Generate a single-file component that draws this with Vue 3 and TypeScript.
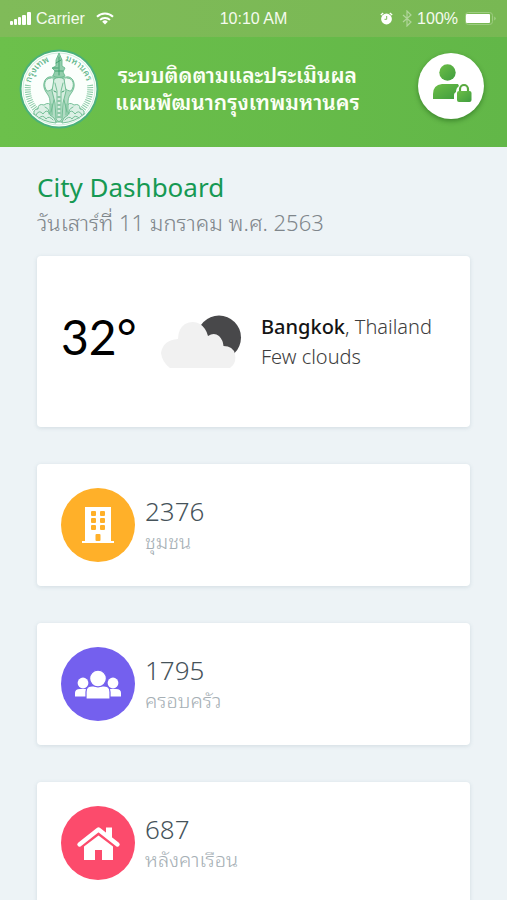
<script setup lang="ts">
interface Stat {
  id: string
  value: number
  label: string
  tone: 'amber' | 'violet' | 'rose'
}

const stats: Stat[] = [
  { id: 'building', value: 2376, label: 'ชุมชน', tone: 'amber' },
  { id: 'family', value: 1795, label: 'ครอบครัว', tone: 'violet' },
  { id: 'house', value: 687, label: 'หลังคาเรือน', tone: 'rose' },
]
</script>

<template>
  <div class="screen">
    <div class="status">
      <div class="status-side">
        <svg class="signal" viewBox="0 0 21 13" aria-hidden="true">
          <rect x="0" y="9" width="3" height="4" rx="1" />
          <rect x="4" y="7" width="3" height="6" rx="1" />
          <rect x="8" y="5" width="3" height="8" rx="1" />
          <rect x="12" y="3" width="4" height="10" rx="1" />
          <rect x="17" y="0" width="4" height="13" rx="1" />
        </svg>
        <span>Carrier</span>
        <svg class="wifi" viewBox="0 0 18 13" aria-hidden="true">
          <path d="M1 4.800a11.500 11.500 0 0 1 16 0M4 7.900a7.200 7.200 0 0 1 10 0" fill="none" stroke="#fff" stroke-width="2" />
          <path d="M9 12.600 6.200 9.700a4 4 0 0 1 5.600 0z" />
        </svg>
      </div>
      <span>10:10 AM</span>
      <div class="status-side end">
        <svg class="alarm" viewBox="0 0 13 13" aria-hidden="true">
          <circle cx="6.5" cy="7" r="5.4" />
          <path d="M.8 3 3.200 1M12.200 3 9.800 1" stroke="#fff" stroke-width="1.300" />
          <path d="M6.700 4v3.300H4.500" fill="none" stroke="#7aba56" stroke-width="1" />
        </svg>
        <svg class="bluetooth" viewBox="0 0 10 17" aria-hidden="true">
          <path d="M1 5l8 7-4 4V1l4 4-8 7" fill="none" stroke="#b0d59a" stroke-width="1.200" />
        </svg>
        <span>100%</span>
        <svg class="battery" viewBox="0 0 32 13" aria-hidden="true">
          <rect x=".5" y=".5" width="27" height="12" rx="3" fill="none" stroke="#9dcc81" />
          <rect x="1" y="2" width="24" height="9" rx="1" />
          <path d="M29.500 4.500q2 2 0 4z" fill="#b9dba4" />
        </svg>
      </div>
    </div>

    <header class="header">
      <svg class="seal" viewBox="0 0 80 80" role="img" aria-label="กรุงเทพมหานคร">
        <defs>
          <path id="arc-left" d="M12 34A29 29 0 0 1 37 11" />
          <path id="arc-right" d="M46 12A29 29 0 0 1 68 34" />
        </defs>
        <circle cx="40" cy="40" r="39.500" fill="#4bb17b" />
        <circle cx="40" cy="40" r="37.500" fill="#fbfffc" />
        <circle cx="40" cy="40" r="36" fill="none" stroke="#b5dfc8" stroke-width=".6" />
        <path d="M9 36A31 31 0 0 0 18 62M71 36A31 31 0 0 1 62 62" fill="none" stroke="#8ccba8" stroke-width="6" stroke-dasharray="1 1.200" />
        <text class="seal-text"><textPath href="#arc-left">กรุงเทพ</textPath></text>
        <text class="seal-text"><textPath href="#arc-right">มหานคร</textPath></text>
        <g fill="none" stroke="#69b98d" stroke-width=".9" stroke-linejoin="round" stroke-linecap="round">
          <path d="M15 65q-1-5 4-5 0-6 6-4 5-4 8 2l4 3v13Q24 73 15 65zM65 65q1-5-4-5 0-6-6-4-5-4-8 2l-4 3v13Q56 73 65 65z" fill="#dcf0e5" />
          <path d="M17 66q3-6 7-1 4-6 7 0M20 69q4-4 7 1 3-4 7 1M26 58q5 2 4 7M63 66q-3-6-7-1-4-6-7 0M60 69q-4-4-7 1-3-4-7 1M54 58q-5 2-4 7" />
          <path d="M33 28C26 26 22 36 27 43c2 3 4 5 4 10v13l4 3 2 4h6l2-4 4-3V53c0-5 2-7 4-10 5-7 1-17-6-15z" fill="#b2dcc4" />
          <path d="M32 29c-7 0-8 8-4 13 5 0 8-4 7-11M48 29c7 0 8 8 4 13-5 0-8-4-7-11" fill="#eef9f2" />
          <path d="M35 30l-2 12 3 12 1 16q3 5 6 0l1-16 3-12-2-12q-5-3-10 0z" fill="#d7eee0" />
          <path d="M36 34l2 8v27M44 34l-2 8v27M35 51l-3 12M45 51l3 12M33 55v11M47 55v11" />
          <path d="M34 27l2-5-3-3 4-2v-6l3-7 3 7v6l3 2-2 4 2 4q-6 3-12 0z" fill="#92ceac" />
          <path d="M40 8v18M36 22h8M37 14l5-3M34 19h5" stroke="#3d9d6b" />
          <path d="M35 42l2 1M45 42l-2 1M39 48h2M39 52h2M39 56h2M39 60h2M39 64h2M39 68h2" stroke="#329461" />
        </g>
      </svg>
      <h1 class="title">ระบบติดตามและประเมินผล<br />แผนพัฒนากรุงเทพมหานคร</h1>
      <button class="account" type="button" aria-label="บัญชีผู้ใช้">
        <svg viewBox="0 0 40 38" aria-hidden="true">
          <defs>
            <linearGradient id="user-fill" x1="0" y1="0" x2="1" y2="1">
              <stop offset="0" stop-color="#6dbe47" />
              <stop offset="1" stop-color="#3f9d3f" />
            </linearGradient>
          </defs>
          <circle cx="15.500" cy="8.500" r="8.200" fill="url(#user-fill)" />
          <path d="M1 35v-5q0-9 9-10h16l1 2q-3 2-3 6-2 1-2 3v4z" fill="url(#user-fill)" />
          <path d="M28 27v-2a4 4 0 0 1 8 0v2" fill="none" stroke="#58a93e" stroke-width="2.200" />
          <rect x="25" y="27" width="14.500" height="11" rx="2" fill="url(#user-fill)" />
        </svg>
      </button>
    </header>

    <main class="content">
      <div class="heading">
        <h2>City Dashboard</h2>
        <p>วันเสาร์ที่ 11 มกราคม พ.ศ. 2563</p>
      </div>

      <section class="card weather">
        <span class="temperature">32°</span>
        <svg class="cloud" viewBox="0 0 81 54" aria-hidden="true">
          <circle cx="58" cy="22.500" r="22" fill="#48484a" />
          <path d="M9 53Q1 47 0 38 2 25 17 24 17 14 24 9 32 5 39 9 45 13 47 21 53 17 58 21 62 25 62.500 31 72 31 74 39 76 48 69 53z" fill="#f1f1f1" />
        </svg>
        <p class="place"><strong>Bangkok</strong>, Thailand<br />Few clouds</p>
      </section>

      <section v-for="stat in stats" :key="stat.id" class="card stat">
        <div class="badge" :class="stat.tone">
          <svg v-if="stat.id === 'building'" viewBox="0 0 48 48" aria-hidden="true">
            <path d="M11 6h26v34h3v2H8v-2h3z" />
            <g fill="#ffb029">
              <rect x="17" y="10" width="5" height="5" rx="1" /><rect x="26" y="10" width="5" height="5" rx="1" />
              <rect x="17" y="17" width="5" height="5" rx="1" /><rect x="26" y="17" width="5" height="5" rx="1" />
              <rect x="17" y="24" width="5" height="5" rx="1" /><rect x="26" y="24" width="5" height="5" rx="1" />
              <rect x="21.500" y="33" width="5" height="7" rx="1" />
            </g>
          </svg>
          <svg v-else-if="stat.id === 'family'" viewBox="0 0 48 48" aria-hidden="true">
            <circle cx="9" cy="23" r="5.400" />
            <circle cx="39" cy="23" r="5.400" />
            <path d="M1 36.500V33q0-4 5-4h6v7.500zM47 36.500V33q0-4-5-4h-6v7.500z" />
            <path d="M12 39V32q0-6 6-6h12q6 0 6 6v7z" stroke="#7460ee" stroke-width="1.200" />
            <circle cx="24" cy="18.500" r="8.400" stroke="#7460ee" stroke-width="1.200" />
          </svg>
          <svg v-else viewBox="0 0 48 48" aria-hidden="true">
            <path d="M5.500 25.500 24.500 10.500l19 15" fill="none" stroke="#fff" stroke-width="4.400" stroke-linecap="round" stroke-linejoin="round" />
            <path d="M32 8.500h6v13l-6-5zM10 27.500l14.500-11 14.500 11V41H28V31h-7v10H10z" />
          </svg>
        </div>
        <div class="figures">
          <span class="value">{{ stat.value }}</span>
          <span class="label">{{ stat.label }}</span>
        </div>
      </section>
    </main>
  </div>
</template>

<style>
body {
  margin: 0;
}
</style>

<style scoped>
.screen {
  display: flex;
  flex-direction: column;
  height: 100vh;
  overflow: hidden;
  background: #edf3f6;
  font-family: "Noto Sans", "Noto Sans Thai Looped", Loma, "Noto Sans Thai", sans-serif;
}
svg {
  display: block;
  fill: #fff;
}
.status {
  display: grid;
  grid-template-columns: 1fr auto 1fr;
  align-items: center;
  flex: none;
  height: 37px;
  padding: 0 10px;
  background: linear-gradient(90deg, #80bb59, #78b853);
  color: #f5fbef;
  font: 16px "Liberation Sans", sans-serif;
}
.status-side {
  display: flex;
  align-items: center;
  gap: 5px;
}
.end {
  justify-content: flex-end;
}
.signal {
  width: 21px;
  height: 13px;
}
.wifi {
  width: 18px;
  height: 13px;
  margin-left: 6px;
}
.alarm {
  width: 13px;
  height: 13px;
}
.bluetooth {
  width: 10px;
  height: 17px;
  margin-left: 4px;
}
.battery {
  width: 32px;
  height: 13px;
  margin-left: 2px;
}
.header {
  display: flex;
  align-items: center;
  justify-content: space-between;
  flex: none;
  box-sizing: border-box;
  height: 110px;
  padding: 0 23px 6px 19px;
  background: linear-gradient(90deg, #6cc04b, #62b748);
}
.seal {
  flex: none;
  width: 80px;
  height: 80px;
}
.seal-text {
  fill: #4fae7d;
  font-size: 9px;
}
.title {
  margin: 0 auto 0 16px;
  color: #fcfff6;
  font-size: 21px;
  font-weight: 600;
  line-height: 27px;
  text-align: center;
  white-space: nowrap;
}
.account {
  display: grid;
  place-items: center;
  flex: none;
  box-sizing: border-box;
  width: 66px;
  height: 66px;
  margin-bottom: 6px;
  padding: 0 0 6px 2px;
  border: 0;
  border-radius: 50%;
  background: #fff;
  box-shadow: 0 2px 5px rgb(0 60 0 / 40%);
}
.account svg {
  width: 40px;
  height: 38px;
}
.content {
  display: flex;
  flex: 1;
  flex-direction: column;
  gap: 37px;
  min-height: 0;
  padding: 23px 37px 37px;
  overflow-y: auto;
  scrollbar-width: none;
}
.heading {
  margin-bottom: -21px;
}
.heading h2 {
  margin: 0;
  color: #169953;
  font-size: 26px;
  font-weight: 400;
  line-height: 34px;
}
.heading p {
  margin: 0;
  color: #7f868b;
  font-size: 22px;
  font-weight: 300;
  line-height: 36px;
}
.card {
  display: flex;
  align-items: center;
  flex: none;
  box-sizing: border-box;
  padding: 24px;
  border-radius: 4px;
  background: #fff;
  box-shadow: 0 1px 4px rgb(90 120 140 / 18%);
}
.weather {
  height: 171px;
}
.temperature {
  width: 100px;
  padding-bottom: 10px;
  font: 48px Lato, sans-serif;
  color: #000;
}
.cloud {
  flex: none;
  width: 81px;
  height: 54px;
}
.place {
  margin: 0 0 0 19px;
  color: #3d3d3d;
  font-size: 20px;
  font-weight: 300;
  line-height: 30px;
}
.place strong {
  color: #151515;
  font-weight: 500;
}
.stat {
  gap: 10px;
  height: 122px;
}
.badge {
  display: grid;
  place-items: center;
  flex: none;
  width: 74px;
  height: 74px;
  border-radius: 50%;
}
.badge svg {
  width: 48px;
  height: 48px;
}
.amber {
  background: #ffb029;
}
.violet {
  background: #7460ee;
}
.rose {
  background: #fc4b6c;
}
.figures {
  display: flex;
  flex-direction: column;
  padding-top: 2px;
  font-weight: 300;
}
.value {
  color: #46535a;
  font-size: 26px;
  line-height: 32px;
}
.label {
  color: #a6afb5;
  font-size: 20px;
  line-height: 30px;
}
</style>
